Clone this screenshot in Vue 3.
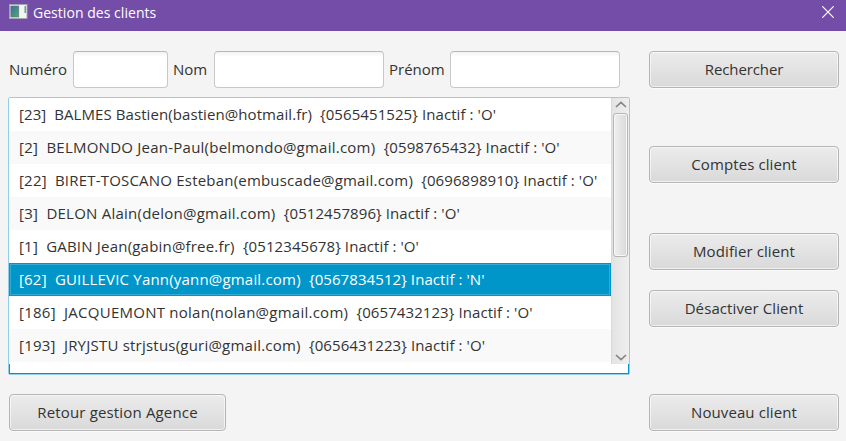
<script setup>
import { ref } from 'vue'

const numero = ref('')
const nom = ref('')
const prenom = ref('')
const selected = ref(5)

// `track` is the letter spacing of the name part, in pixels
const clients = [
  { id: 23, name: 'BALMES Bastien(bastien@hotmail.fr)', phone: '{0565451525}', inactive: 'O', track: 0.08 },
  { id: 2, name: 'BELMONDO Jean-Paul(belmondo@gmail.com)', phone: '{0598765432}', inactive: 'O', track: 0.24 },
  { id: 22, name: 'BIRET-TOSCANO Esteban(embuscade@gmail.com)', phone: '{0696898910}', inactive: 'O', track: 0.2 },
  { id: 3, name: 'DELON Alain(delon@gmail.com)', phone: '{0512457896}', inactive: 'O', track: 0.24 },
  { id: 1, name: 'GABIN Jean(gabin@free.fr)', phone: '{0512345678}', inactive: 'O', track: 0.2 },
  { id: 62, name: 'GUILLEVIC Yann(yann@gmail.com)', phone: '{0567834512}', inactive: 'N', track: 0.19 },
  { id: 186, name: 'JACQUEMONT nolan(nolan@gmail.com)', phone: '{0657432123}', inactive: 'O', track: 0.25 },
  { id: 193, name: 'JRYJSTU strjstus(guri@gmail.com)', phone: '{0656431223}', inactive: 'O', track: 0.22 }
]
</script>

<template>
  <div class="window">
    <header class="titlebar">
      <svg class="app-icon" width="19" height="16" viewBox="0 0 19 16">
        <defs>
          <linearGradient id="pane" x1="0" y1="0" x2="1" y2="1">
            <stop offset="0" stop-color="#3b6fa0" />
            <stop offset="1" stop-color="#4cab72" />
          </linearGradient>
        </defs>
        <rect x="0.5" y="0.5" width="17.5" height="14" fill="#f3f3f3" stroke="#a5a3ad" />
        <rect x="1.8" y="2" width="8" height="11" fill="url(#pane)" stroke="#64717a" stroke-width="0.6" />
        <path d="M16.2 2v7" stroke="#5fa596" stroke-width="1.5" />
      </svg>
      <span class="title">Gestion des clients</span>
      <svg class="close" width="12" height="12" viewBox="0 0 12 12">
        <path d="M0.3 0.3L11.7 11.7M11.7 0.3L0.3 11.7" stroke="#fff" stroke-width="1.2" />
      </svg>
    </header>

    <main class="content">
      <section class="left">
        <div class="search">
          <label class="l-num" for="numero">Numéro</label>
          <input id="numero" v-model="numero" class="field short" />
          <label class="l-nom" for="nom">Nom</label>
          <input id="nom" v-model="nom" class="field" />
          <label class="l-pre" for="prenom">Prénom</label>
          <input id="prenom" v-model="prenom" class="field" />
        </div>

        <div class="list">
          <div class="viewport">
            <ul class="rows">
              <li
                v-for="(c, i) in clients"
                :key="c.id"
                :class="['row', { odd: i % 2, selected: i === selected }]"
                @click="selected = i"
              ><span :style="{ letterSpacing: c.track + 'px' }">{{ `[${c.id}]  ${c.name}  ` }}</span><span class="tail">{{ `${c.phone} Inactif : '${c.inactive}'` }}</span></li>
            </ul>
            <div class="scrollbar">
              <svg class="arrow" width="12" height="7" viewBox="0 0 12 7">
                <path d="M1 6L6 1.3L11 6" fill="none" stroke="#858585" stroke-width="1.7" />
              </svg>
              <div class="thumb"></div>
              <svg class="arrow down" width="12" height="7" viewBox="0 0 12 7">
                <path d="M1 1L6 5.7L11 1" fill="none" stroke="#858585" stroke-width="1.7" />
              </svg>
            </div>
          </div>
          <div class="list-foot"></div>
        </div>

        <button class="btn back">Retour gestion Agence</button>
      </section>

      <aside class="actions">
        <button class="btn rechercher">Rechercher</button>
        <button class="btn comptes">Comptes client</button>
        <button class="btn modifier">Modifier client</button>
        <button class="btn desactiver">Désactiver Client</button>
        <button class="btn nouveau">Nouveau client</button>
      </aside>
    </main>
  </div>
</template>

<style>
body {
  background: #f4f4f4;
}
</style>

<style scoped>
* {
  box-sizing: border-box;
}
.window {
  width: 846px;
  height: 441px;
  overflow: hidden;
  background: #f4f4f4;
  color: #333;
  font-family: 'Open Sans', 'Noto Sans', sans-serif;
  font-size: 15px;
}
.titlebar {
  display: flex;
  align-items: center;
  height: 31px;
  padding: 0 12px 6px 9px;
  background: #744da9;
  color: #fff;
}
.app-icon {
  margin-top: -1px;
}
.title {
  margin-left: 5px;
  font-size: 14px;
  line-height: 20px;
  letter-spacing: 0.04px;
}
.close {
  margin-left: auto;
  margin-top: -1px;
}
.content {
  display: flex;
  justify-content: space-between;
  padding: 20px 7px 0 8px;
}
.left {
  width: 622px;
}
.search {
  display: flex;
  align-items: center;
  padding-left: 1px;
}
.l-num {
  width: 64px;
}
.l-nom {
  width: 41px;
  margin-left: 5px;
}
.l-pre {
  width: 61px;
  margin-left: 5px;
}
.search label {
  padding-bottom: 2px;
  white-space: nowrap;
}
.field {
  width: 170px;
  height: 37px;
  border: 1px solid #c8c8c8;
  border-top-color: #b8b8b8;
  border-radius: 4px;
  background: linear-gradient(#f3f3f3, #fff 5px);
  font: inherit;
  outline: none;
}
.short {
  width: 95px;
}
.list {
  height: 278px;
  margin-top: 9px;
  border: 1px solid #8fd0e8;
  border-radius: 2px;
  background: #fff;
}
.viewport {
  display: flex;
  height: 266px;
}
.rows {
  flex: 1;
  margin: 0;
  padding: 0;
  list-style: none;
}
.row {
  height: 33px;
  padding-left: 10px;
  background: #fff;
  line-height: 33px;
  white-space: pre;
}
.tail {
  letter-spacing: 0.08px;
}
.row.odd {
  background: #f9f9f9;
}
.row.selected {
  background: #0096c9;
  box-shadow: inset 0 0 0 1px #0096c9, inset 0 0 0 2px #33abd4;
  color: #fff;
}
.scrollbar {
  display: flex;
  flex-direction: column;
  align-items: center;
  width: 18px;
  padding: 3px 0 3px;
  border-left: 1px solid #d9d9d9;
  background: linear-gradient(90deg, #e3e3e3, #efefef);
}
.arrow {
  flex: none;
}
.thumb {
  width: 15px;
  height: 144px;
  margin-top: 5px;
  border: 1px solid #b5b5b5;
  border-radius: 3px;
  background: linear-gradient(90deg, #efefef, #d9d9d9);
  box-shadow: inset 0 0 0 1px #f7f7f7;
}
.down {
  margin-top: auto;
}
.list-foot {
  height: 10px;
  border: 1px solid #0096c9;
  border-top: 0;
}
.btn {
  display: block;
  width: 190px;
  height: 37px;
  padding: 0 0 2px;
  border: 1px solid #b5b5b5;
  border-radius: 4px;
  background: linear-gradient(#ececec, #d9d9d9);
  box-shadow: inset 0 0 0 1px rgba(255, 255, 255, 0.6), 0 1px 0 #fafafa;
  color: #333;
  font: inherit;
  letter-spacing: 0.1px;
}
.rechercher {
  letter-spacing: -0.1px;
}
.back {
  width: 217px;
  margin: 19px 0 0 1px;
  letter-spacing: 0.16px;
}
.comptes {
  margin-top: 58px;
}
.modifier {
  margin-top: 50px;
}
.desactiver {
  margin-top: 20px;
}
.nouveau {
  margin-top: 67px;
}
</style>
